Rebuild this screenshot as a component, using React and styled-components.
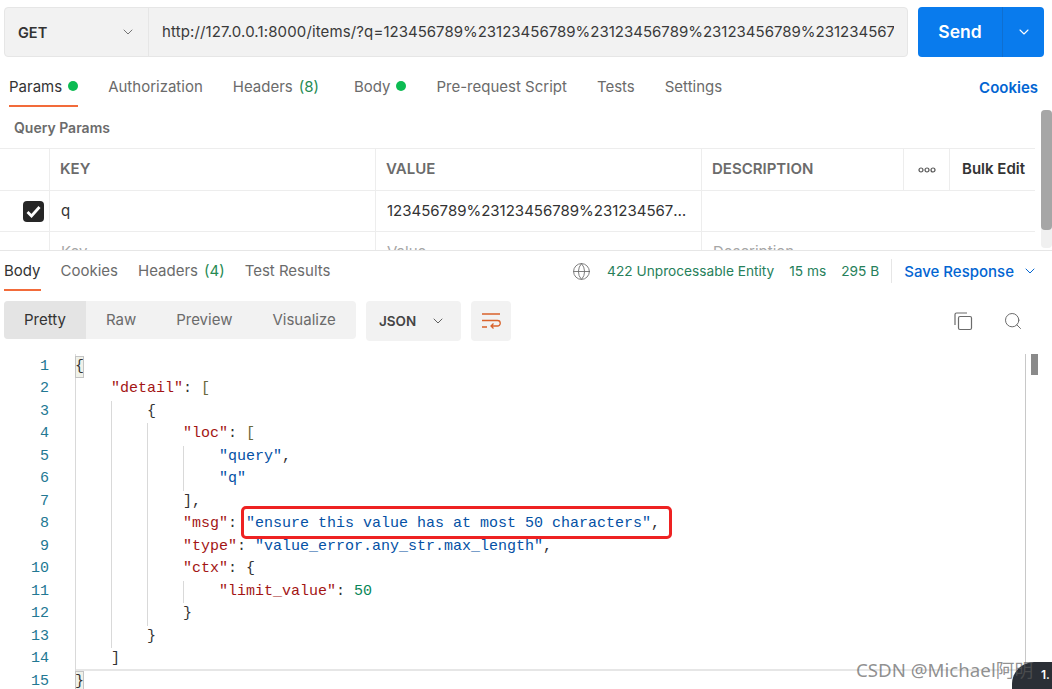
import React from "react";
import styled, { createGlobalStyle } from "styled-components";
import { ChevronDown, Globe, Search } from "lucide-react";

const GlobalStyle = createGlobalStyle`
  html, body {
    margin: 0;
    padding: 0;
    background: #fff;
  }
  body {
    font-family: Inter, "Noto Sans", "Liberation Sans", sans-serif;
    overflow: hidden;
  }
`;

const requestTabs = [
  { label: "Params", dot: true, active: true },
  { label: "Authorization" },
  { label: "Headers", count: 8, extra: 5 },
  { label: "Body", dot: true },
  { label: "Pre-request Script" },
  { label: "Tests" },
  { label: "Settings" },
];

const responseTabs = [
  { label: "Body", active: true },
  { label: "Cookies" },
  { label: "Headers", count: 4 },
  { label: "Test Results" },
];

const viewModes = ["Pretty", "Raw", "Preview", "Visualize"];

const App = () => {
  const codeLines = getCodeLines();
  return (
    <Page>
      <GlobalStyle />
      <RequestPane>
        <UrlRow>
          <UrlBox>
            <MethodSelect>
              GET
              <ChevronDown size={16} strokeWidth={1.4} color="#6b6b6b" />
            </MethodSelect>
            <UrlText>
              <UrlBase>http://127.0.0.1:8000/items/?q=</UrlBase>
              123456789%23123456789%23123456789%23123456789%23123456789%23123456789%23
            </UrlText>
          </UrlBox>
          <SendButton>
            <SendLabel>Send</SendLabel>
            <SendMenu>
              <ChevronDown size={16} strokeWidth={1.6} color="#fff" />
            </SendMenu>
          </SendButton>
        </UrlRow>

        <RequestTabs>
          {requestTabs.map((tab) => (
            <RequestTab key={tab.label} $active={tab.active} $extra={tab.extra}>
              {tab.label}
              {tab.count && <Count>({tab.count})</Count>}
              {tab.dot && <Dot />}
            </RequestTab>
          ))}
          <CookiesLink>Cookies</CookiesLink>
        </RequestTabs>

        <SectionTitle>Query Params</SectionTitle>

        <ParamsTable>
          <HeaderRow>
            <Cell />
            <HeadCell>KEY</HeadCell>
            <HeadCell>VALUE</HeadCell>
            <HeadCell>DESCRIPTION</HeadCell>
            <DotsCell>
              <svg width="18" height="6" viewBox="0 0 18 6" fill="none" stroke="#555" strokeWidth="1.2">
                <circle cx="3" cy="3" r="2" />
                <circle cx="9" cy="3" r="2" />
                <circle cx="15" cy="3" r="2" />
              </svg>
            </DotsCell>
            <BulkCell>Bulk Edit</BulkCell>
          </HeaderRow>
          <ParamRow>
            <CheckCell>
              <CheckBox>
                <svg width="15" height="13" viewBox="0 0 15 13" fill="none" stroke="#fff" strokeWidth="2.8">
                  <path d="M1.5 7 L5.5 11 L13.5 2" />
                </svg>
              </CheckBox>
            </CheckCell>
            <ValueCell>q</ValueCell>
            <ValueCell>123456789%23123456789%23123456789%23123456789%23</ValueCell>
            <ValueCell $plain />
          </ParamRow>
          <ParamRow>
            <Cell />
            <ValueCell $placeholder>Key</ValueCell>
            <ValueCell $placeholder>Value</ValueCell>
            <ValueCell $placeholder $plain>Description</ValueCell>
          </ParamRow>
        </ParamsTable>

        <PaneTrack>
          <PaneThumb />
        </PaneTrack>
      </RequestPane>

      <ResponseBar>
        <ResponseTabs>
          {responseTabs.map((tab) => (
            <ResponseTab key={tab.label} $active={tab.active}>
              {tab.label}
              {tab.count && <Count>({tab.count})</Count>}
            </ResponseTab>
          ))}
        </ResponseTabs>
        <ResponseMeta>
          <GlobeBox>
            <Globe size={19} strokeWidth={1.1} color="#6b6b6b" />
          </GlobeBox>
          <StatusText>422 Unprocessable Entity</StatusText>
          <StatusText>15 ms</StatusText>
          <StatusText>295 B</StatusText>
          <MetaDivider />
          <SaveLink>Save Response</SaveLink>
          <ChevronDown size={16} strokeWidth={1.5} color="#0265d2" />
        </ResponseMeta>
      </ResponseBar>

      <Toolbar>
        <ModeGroup>
          {viewModes.map((mode, i) => (
            <ModeItem key={mode} $active={i === 0}>{mode}</ModeItem>
          ))}
        </ModeGroup>
        <FormatSelect>
          JSON
          <ChevronDown size={16} strokeWidth={1.4} color="#555" />
        </FormatSelect>
        <WrapButton>
          <svg width="20" height="18" viewBox="0 0 20 18" fill="none" stroke="#d9622b" strokeWidth="1.3">
            <path d="M1 2h18M1 8.5h15.5a2.6 2.6 0 0 1 0 5.5H10M12.5 11.5 10 14l2.5 2.5M1 15h5" />
          </svg>
        </WrapButton>
        <ToolbarIcons>
          <svg width="20" height="20" viewBox="0 0 20 20" fill="none" stroke="#6b6b6b" strokeWidth="1.2">
            <rect x="5.5" y="5.5" width="13" height="13" rx="1.5" />
            <path d="M2 14V3.5A1.5 1.5 0 0 1 3.5 2H14" />
          </svg>
          <Search size={20} strokeWidth={1.2} color="#6b6b6b" />
        </ToolbarIcons>
      </Toolbar>

      <Editor>
        <Gutter>
          {codeLines.map((_, i) => (
            <LineNumber key={i}>{i + 1}</LineNumber>
          ))}
        </Gutter>
        <CodeArea>
          {codeLines.map((line, i) => (
            <CodeLine key={i}>
              {Array.from({ length: line.depth }).map((_, d) => (
                <IndentGuide key={d} />
              ))}
              {line.matched ? <MatchedBracket>{line.code}</MatchedBracket> : <span>{line.code}</span>}
            </CodeLine>
          ))}
          <Callout />
        </CodeArea>
        <EditorScroll>
          <EditorThumb />
        </EditorScroll>
      </Editor>

      <CornerBadge>1.</CornerBadge>
      <Watermark>CSDN @Michael阿明</Watermark>
    </Page>
  );
};

const Page = styled.div`
  position: relative;
  width: 1052px;
  height: 689px;
  overflow: hidden;
  background: #fff;
  color: #212121;
`;

const RequestPane = styled.div`
  position: relative;
  height: 251px;
  box-sizing: border-box;
  overflow: hidden;
  border-bottom: 1px solid #e6e6e6;
`;

const UrlRow = styled.div`
  display: flex;
  align-items: center;
  gap: 10px;
  padding: 7px 8px 0 4px;
`;

const UrlBox = styled.div`
  display: flex;
  flex: 1;
  min-width: 0;
  height: 50px;
  box-sizing: border-box;
  background: #f2f2f2;
  border: 1px solid #e6e6e6;
  border-radius: 4px;
`;

const MethodSelect = styled.div`
  display: flex;
  align-items: center;
  justify-content: space-between;
  flex: 0 0 144px;
  box-sizing: border-box;
  padding: 0 12px 0 13px;
  border-right: 1px solid #e6e6e6;
  font-size: 14.5px;
  font-weight: 600;
  color: #333;
`;

const UrlText = styled.div`
  flex: 1;
  min-width: 0;
  margin: 0 13px;
  overflow: hidden;
  white-space: nowrap;
  line-height: 48px;
  font-size: 15px;
  color: #3a3a3a;
`;

const UrlBase = styled.span`
  letter-spacing: 0.13px;
`;

const SendButton = styled.div`
  display: flex;
  flex: 0 0 126px;
  height: 50px;
  border-radius: 4px;
  background: #097bed;
  color: #fff;
`;

const SendLabel = styled.div`
  flex: 1;
  text-align: center;
  line-height: 50px;
  font-size: 17.5px;
  font-weight: 600;
  border-right: 1px solid #0f6fd0;
`;

const SendMenu = styled.div`
  display: flex;
  align-items: center;
  justify-content: center;
  flex: 0 0 41px;
`;

const RequestTabs = styled.div`
  display: flex;
  align-items: stretch;
  gap: 30px;
  height: 50px;
  padding: 0 14px 0 9px;
`;

const RequestTab = styled.div`
  display: flex;
  align-items: center;
  gap: 6px;
  height: 50px;
  padding-top: 10px;
  margin-right: ${(p) => (p.$extra ? p.$extra : 0)}px;
  box-sizing: border-box;
  white-space: pre;
  font-size: 15px;
  color: ${(p) => (p.$active ? "#333" : "#6b6b6b")};
  border-bottom: 2px solid ${(p) => (p.$active ? "#f26b3a" : "transparent")};
`;

const Count = styled.span`
  color: #268a53;
`;

const Dot = styled.span`
  width: 10px;
  height: 10px;
  border-radius: 50%;
  background: #0cbb52;
`;

const CookiesLink = styled.div`
  margin-left: auto;
  padding: 10px 0 0;
  align-self: center;
  font-size: 15px;
  font-weight: 600;
  color: #0265d2;
`;

const SectionTitle = styled.div`
  height: 41px;
  box-sizing: border-box;
  padding: 12px 14px 0;
  font-size: 14px;
  font-weight: 600;
  color: #6b6b6b;
`;

const ParamsTable = styled.div`
  width: 1035px;
  border-top: 1px solid #ededed;
`;

const TableRow = styled.div`
  display: grid;
  grid-template-columns: 50px 326px 326px 202px 46px 85px;
  border-bottom: 1px solid #ededed;
`;

const HeaderRow = styled(TableRow)`
  height: 41px;
`;

const ParamRow = styled(TableRow)`
  height: 40px;
`;

const Cell = styled.div`
  box-sizing: border-box;
  border-right: ${(p) => (p.$plain ? "none" : "1px solid #ededed")};
`;

const HeadCell = styled(Cell)`
  display: flex;
  align-items: center;
  padding: 0 0 2px 10px;
  font-size: 15px;
  font-weight: 600;
  color: #6b6b6b;
`;

const DotsCell = styled(Cell)`
  display: flex;
  align-items: center;
  justify-content: center;
`;

const BulkCell = styled(Cell)`
  display: flex;
  align-items: center;
  padding: 0 0 2px 12px;
  border-right: none;
  font-size: 15px;
  font-weight: 600;
  color: #333;
`;

const CheckCell = styled(Cell)`
  display: flex;
  align-items: center;
  padding-left: 23px;
`;

const CheckBox = styled.div`
  display: flex;
  align-items: center;
  justify-content: center;
  width: 21px;
  height: 21px;
  border-radius: 4px;
  background: #262626;
`;

const ValueCell = styled(Cell)`
  padding: 0 11px;
  overflow: hidden;
  white-space: nowrap;
  text-overflow: ellipsis;
  line-height: 39px;
  font-size: 15px;
  color: ${(p) => (p.$placeholder ? "#a6a6a6" : "#333")};
`;

const PaneTrack = styled.div`
  position: absolute;
  top: 110px;
  right: 0;
  width: 11px;
  height: 138px;
  border-radius: 4px;
  background: #f0f0f0;
`;

const PaneThumb = styled.div`
  height: 120px;
  border-radius: 4px;
  background: #a6a6a6;
`;

const ResponseBar = styled.div`
  display: flex;
  justify-content: space-between;
  height: 40px;
  padding: 0 14px 0 4px;
`;

const ResponseTabs = styled.div`
  display: flex;
  gap: 20px;
`;

const ResponseTab = styled.div`
  display: flex;
  align-items: center;
  gap: 6px;
  height: 40px;
  padding-top: 1px;
  box-sizing: border-box;
  white-space: pre;
  font-size: 15px;
  color: ${(p) => (p.$active ? "#333" : "#6b6b6b")};
  border-bottom: 2px solid ${(p) => (p.$active ? "#f26b3a" : "transparent")};
`;

const ResponseMeta = styled.div`
  display: flex;
  align-items: center;
  gap: 15px;
  height: 40px;
`;

const GlobeBox = styled.div`
  display: flex;
  margin-right: 1px;
`;

const StatusText = styled.div`
  font-size: 13.7px;
  color: #26805a;
`;

const MetaDivider = styled.div`
  width: 1px;
  height: 24px;
  margin: 0 -3px 0 -3px;
  background: #e6e6e6;
`;

const SaveLink = styled.div`
  margin-right: -7px;
  font-size: 15px;
  font-weight: 500;
  color: #0265d2;
`;

const Toolbar = styled.div`
  display: flex;
  align-items: flex-start;
  height: 63px;
  box-sizing: border-box;
  padding: 10px 0 0 4px;
`;

const ModeGroup = styled.div`
  display: flex;
  width: 352px;
  height: 38px;
  border-radius: 4px;
  overflow: hidden;
  background: #f2f2f2;
`;

const ModeItem = styled.div`
  padding: 0 20px;
  line-height: 38px;
  font-size: 15px;
  color: ${(p) => (p.$active ? "#333" : "#6b6b6b")};
  background: ${(p) => (p.$active ? "#e4e4e4" : "transparent")};
`;

const FormatSelect = styled.div`
  display: flex;
  align-items: center;
  justify-content: space-between;
  box-sizing: border-box;
  width: 95px;
  height: 40px;
  margin-left: 10px;
  padding: 0 15px 0 13px;
  border-radius: 4px;
  background: #f2f2f2;
  font-size: 13.5px;
  font-weight: 600;
  color: #444;
`;

const WrapButton = styled.div`
  display: flex;
  align-items: center;
  justify-content: center;
  width: 40px;
  height: 40px;
  margin-left: 10px;
  border-radius: 4px;
  background: #f2f2f2;
`;

const ToolbarIcons = styled.div`
  display: flex;
  align-items: center;
  gap: 30px;
  height: 40px;
  margin-left: auto;
  padding-right: 29px;
`;

const Editor = styled.div`
  position: relative;
  display: flex;
  height: 335px;
  font-family: "Liberation Mono", "DejaVu Sans Mono", monospace;
  font-size: 15px;
  line-height: 22.5px;
`;

const Gutter = styled.div`
  flex: 0 0 75px;
  box-sizing: border-box;
  padding: 1.5px 26px 0 0;
  text-align: right;
  color: #237893;
`;

const LineNumber = styled.div`
  height: 22.5px;
`;

const CodeArea = styled.div`
  position: relative;
  flex: 0 0 951px;
  height: 317px;
  box-sizing: border-box;
  padding-top: 1.5px;
  border-left: 1px solid #dcdcdc;
  border-right: 1px solid #c8c8c8;
  border-bottom: 2px solid #e6e6e6;
  color: #333;
`;

const CodeLine = styled.div`
  display: flex;
  height: 22.5px;
  white-space: pre;
  margin-left: -1px;
`;

const IndentGuide = styled.span`
  flex: 0 0 36px;
  box-sizing: border-box;
  border-left: 1px solid #d9d9d9;
`;

const MatchedBracket = styled.span`
  box-sizing: border-box;
  width: 9px;
  background: #f0f2ea;
  outline: 1px solid #c4c4c4;
  outline-offset: -1px;
`;

const Key = styled.span`
  color: #a31515;
`;

const Str = styled.span`
  color: #0451a5;
`;

const Num = styled.span`
  color: #098658;
`;

const Bracket = styled.span`
  color: #6a6a3c;
`;

const Callout = styled.div`
  position: absolute;
  left: 165px;
  top: 152px;
  width: 431px;
  height: 33px;
  box-sizing: border-box;
  border: 3px solid #ee2222;
  border-radius: 5px;
`;

const EditorScroll = styled.div`
  position: absolute;
  left: 1031px;
  top: 0;
  width: 7px;
`;

const EditorThumb = styled.div`
  height: 21px;
  background: #8a8a8a;
`;

const CornerBadge = styled.div`
  position: absolute;
  right: 0;
  bottom: 0;
  width: 40px;
  height: 27px;
  box-sizing: border-box;
  padding: 5px 0 0 29px;
  border-top-left-radius: 22px;
  background: #2b2f36;
  color: #fff;
  font-size: 12px;
  font-weight: 600;
  overflow: hidden;
`;

const Watermark = styled.div`
  position: absolute;
  left: 856px;
  top: 658px;
  white-space: nowrap;
  font-family: "Noto Sans", "Noto Sans CJK SC", sans-serif;
  font-size: 18.7px;
  line-height: 24px;
  color: rgba(90, 90, 90, 0.68);
`;

const getCodeLines = () => [
  { depth: 0, matched: true, code: "{" },
  { depth: 1, code: <><Key>"detail"</Key>: <Bracket>[</Bracket></> },
  { depth: 2, code: "{" },
  { depth: 3, code: <><Key>"loc"</Key>: <Bracket>[</Bracket></> },
  { depth: 4, code: <><Str>"query"</Str>,</> },
  { depth: 4, code: <Str>"q"</Str> },
  { depth: 3, code: "]," },
  { depth: 3, code: <><Key>"msg"</Key>: <Str>"ensure this value has at most 50 characters"</Str>,</> },
  { depth: 3, code: <><Key>"type"</Key>: <Str>"value_error.any_str.max_length"</Str>,</> },
  { depth: 3, code: <><Key>"ctx"</Key>: {"{"}</> },
  { depth: 4, code: <><Key>"limit_value"</Key>: <Num>50</Num></> },
  { depth: 3, code: "}" },
  { depth: 2, code: "}" },
  { depth: 1, code: "]" },
  { depth: 0, matched: true, code: "}" },
];

export default App;
